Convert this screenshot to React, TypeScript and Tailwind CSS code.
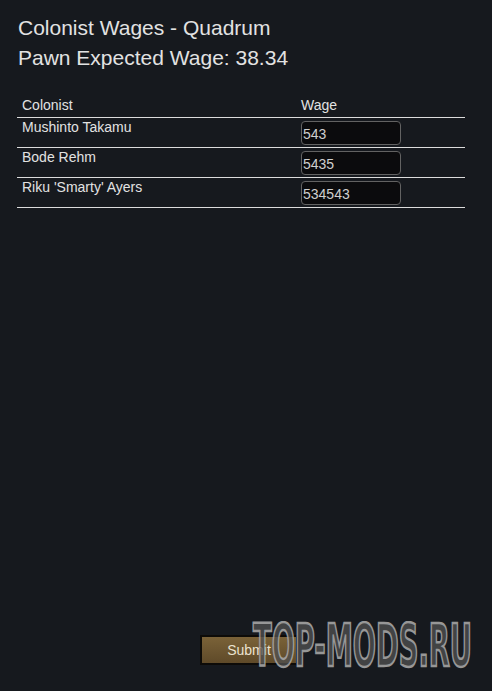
import { useState } from "react";

const colonists = [
  { name: "Mushinto Takamu", wage: "543" },
  { name: "Bode Rehm", wage: "5435" },
  { name: "Riku 'Smarty' Ayers", wage: "534543" },
];

function WageRow({ name, wage }: { name: string; wage: string }) {
  const [value, setValue] = useState(wage);
  return (
    <div className="flex h-[30px] border-b border-[#dcdcdc]">
      <div className="w-[284px] pl-[5px] pt-[1px] leading-[16px]">{name}</div>
      <div className="pt-[3px]">
        <input
          value={value}
          onChange={(e) => setValue(e.target.value)}
          className="h-[24px] w-[100px] rounded-[4px] border border-[#626262] bg-[#0b0b0d] px-[1px] pt-[1px] text-[14px] text-[#cfcfcf] outline-none"
        />
      </div>
    </div>
  );
}

export default function App() {
  return (
    <div
      className="relative flex h-[691px] w-full flex-col bg-[#16191e] text-[#e2e2e2]"
      style={{ fontFamily: '"Liberation Sans", Arial, sans-serif' }}
    >
      {/* Header */}
      <div className="pl-[18px] pt-[13px] text-[21px] leading-[30px]">
        <div>Colonist Wages - Quadrum</div>
        <div>Pawn Expected Wage: 38.34</div>
      </div>

      {/* Table */}
      <div className="ml-[17px] mt-[24px] w-[448px] text-[14px]">
        <div className="flex h-[21px] border-b border-[#dcdcdc] leading-[16px]">
          <div className="w-[284px] pl-[5px]">Colonist</div>
          <div>Wage</div>
        </div>
        {colonists.map((c) => (
          <WageRow key={c.name} name={c.name} wage={c.wage} />
        ))}
      </div>

      <div className="flex-1" />

      {/* Footer */}
      <div className="flex pb-[26px] pl-[200px]">
        <button className="h-[30px] w-[98px] border-2 border-[#0d0b08] bg-[linear-gradient(#7a6238,#5f4a29)] text-[14px] text-[#ece3d0]">
          Submit
        </button>
      </div>

      {/* Watermark */}
      <svg
        className="pointer-events-none absolute left-[249px] top-[621px] opacity-90"
        width="232"
        height="48"
        viewBox="0 0 232 48"
      >
        <text
          x="4"
          y="45"
          fontSize="58"
          fontWeight="bold"
          fontFamily='"DejaVu Sans Condensed", "DejaVu Sans", sans-serif'
          textLength="219"
          lengthAdjust="spacingAndGlyphs"
          fill="#515151"
          fillOpacity="0.85"
          stroke="#a5a5a5"
          strokeWidth="2.5"
        >
          TOP-MODS.RU
        </text>
      </svg>
    </div>
  );
}
